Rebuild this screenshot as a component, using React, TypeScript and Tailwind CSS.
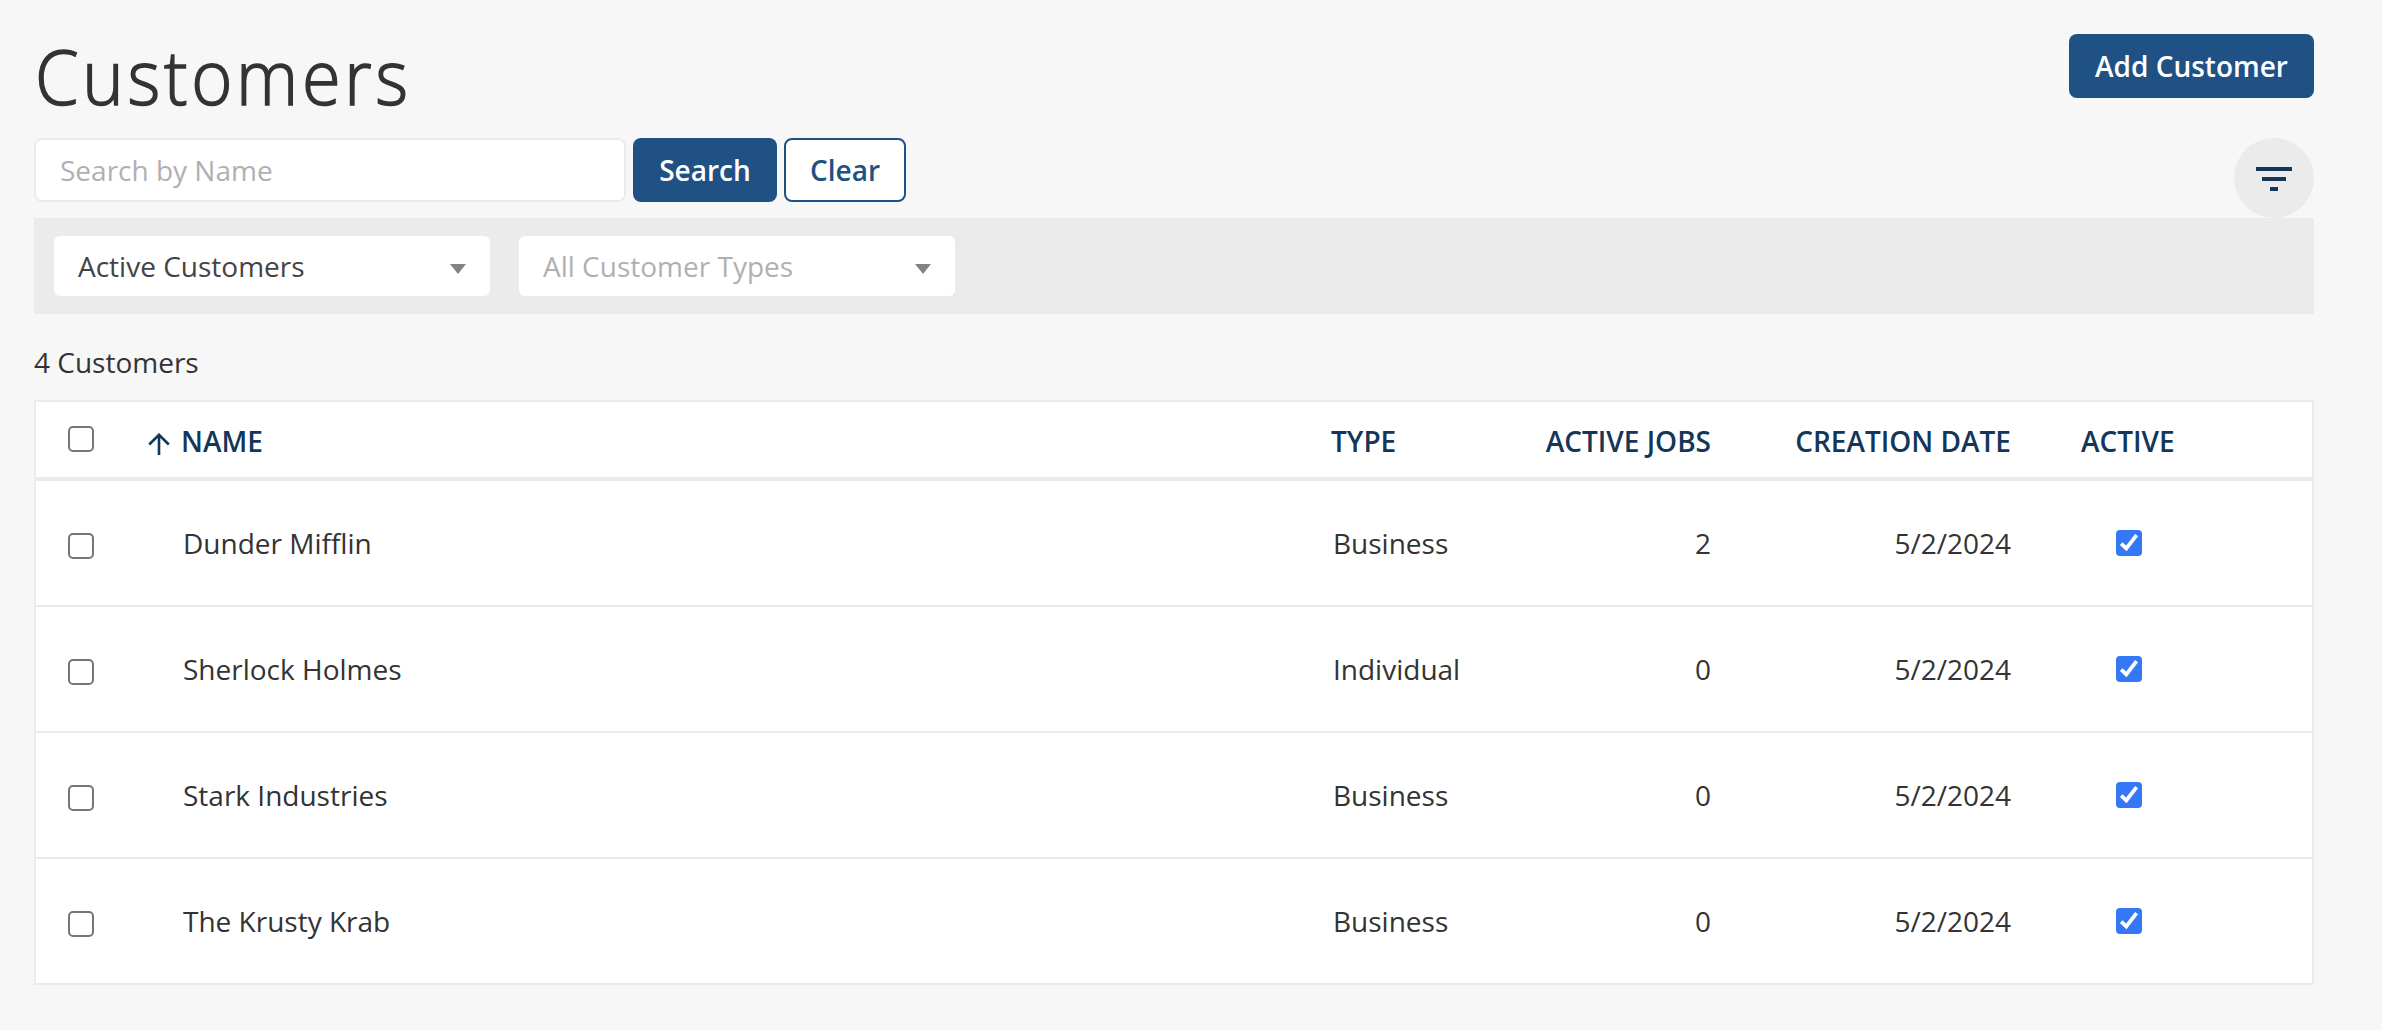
import { useState } from "react";

const customers = [
  { name: "Dunder Mifflin", type: "Business", jobs: 2, created: "5/2/2024" },
  { name: "Sherlock Holmes", type: "Individual", jobs: 0, created: "5/2/2024" },
  { name: "Stark Industries", type: "Business", jobs: 0, created: "5/2/2024" },
  { name: "The Krusty Krab", type: "Business", jobs: 0, created: "5/2/2024" },
];

const columns =
  "grid grid-cols-[112px_1183px_200px_180px_300px_1fr] items-center";

function Checkbox({ checked, onChange }: { checked: boolean; onChange: () => void }) {
  return (
    <button
      type="button"
      role="checkbox"
      aria-checked={checked}
      onClick={onChange}
      className={`block w-[26px] h-[26px] ${
        checked
          ? "rounded-[4px] bg-[#3478f6]"
          : "rounded-[5px] border-2 border-[#76767a] bg-white"
      }`}
    >
      {checked && (
        <svg viewBox="0 0 26 26" className="block w-[26px] h-[26px]">
          <path
            d="M5.2 13.6 L10.3 18.4 L20.6 5.2"
            fill="none"
            stroke="#fff"
            strokeWidth="3.8"
          />
        </svg>
      )}
    </button>
  );
}

function Select({ label, muted }: { label: string; muted?: boolean }) {
  return (
    <button
      type="button"
      className="flex items-center justify-between w-[436px] h-[60px] pl-6 pr-6 rounded-md bg-white"
    >
      <span className={muted ? "text-[#b0b0b0]" : "text-[#444]"}>{label}</span>
      <svg viewBox="0 0 16 10" className="w-4 h-2.5 mt-[6px]">
        <path d="M0 0h16L8 10z" fill="#808285" />
      </svg>
    </button>
  );
}

export default function App() {
  const [query, setQuery] = useState("");
  const [selected, setSelected] = useState<string[]>([]);
  const [inactive, setInactive] = useState<string[]>([]);

  const toggle = (list: string[], name: string) =>
    list.includes(name) ? list.filter((n) => n !== name) : [...list, name];

  const allSelected = selected.length === customers.length;

  return (
    <div className="min-h-screen bg-[#f7f7f7] pl-[34px] pr-[68px] pt-[34px] font-['Open_Sans',sans-serif] text-[28px] leading-[38px] text-[#333]">
      {/* Title */}
      <div className="flex items-start justify-between h-[104px]">
        <h1 className="origin-left scale-x-[0.925] font-light tracking-[4px] [-webkit-text-stroke:1.5px_#333] text-[76px] leading-[90px] text-[#333] -mt-[3px] ml-px">
          Customers
        </h1>
        <button
          type="button"
          className="w-[245px] h-16 rounded-lg bg-[#205184] text-white font-semibold"
        >
          Add Customer
        </button>
      </div>

      {/* Search */}
      <div className="flex items-start justify-between">
        <div className="flex gap-[7px]">
          <input
            type="text"
            placeholder="Search by Name"
            value={query}
            onChange={(e) => setQuery(e.target.value)}
            className="w-[592px] h-16 px-6 rounded-lg border-2 border-[#ebebeb] bg-white placeholder-[#b0b0b0] focus:outline-none"
          />
          <button
            type="button"
            className="w-36 h-16 rounded-lg bg-[#205184] text-white font-semibold"
          >
            Search
          </button>
          <button
            type="button"
            onClick={() => setQuery("")}
            className="w-[122px] h-16 rounded-lg border-2 border-[#205184] bg-white text-[#205184] font-semibold"
          >
            Clear
          </button>
        </div>
        <button
          type="button"
          aria-label="Filter"
          className="flex items-center justify-center w-20 h-20 rounded-full bg-[#ebebeb]"
        >
          <svg viewBox="0 0 36 24" className="w-9 h-6 mt-[2px]">
            <path d="M0 0h36v4H0zM6 10h24v4H6zM14 20h8v4h-8z" fill="#133659" />
          </svg>
        </button>
      </div>

      {/* Filters */}
      <div className="flex items-center gap-[29px] h-24 px-5 bg-[#ebebeb]">
        <Select label="Active Customers" />
        <Select label="All Customer Types" muted />
      </div>

      <p className="mt-[29px] mb-[19px]">{customers.length} Customers</p>

      {/* Table */}
      <div className="border-2 border-b-0 border-[#ebebeb] bg-white">
        <div
          className={`${columns} h-[79px] border-b-4 border-[#ebebeb] font-semibold text-[#133659]`}
        >
          <div className="pl-8 pb-[2px]">
            <Checkbox
              checked={allSelected}
              onChange={() =>
                setSelected(allSelected ? [] : customers.map((c) => c.name))
              }
            />
          </div>
          <div className="flex items-center gap-[11px] pt-[3px]">
            <svg viewBox="0 0 22 22" className="w-[22px] h-[22px] mt-[6px]">
              <path
                d="M11 22V2M1.2 11.5L11 1.8l9.8 9.7"
                fill="none"
                stroke="#133659"
                strokeWidth="2.6"
              />
            </svg>
            NAME
          </div>
          <div className="pt-[3px]">TYPE</div>
          <div className="pt-[3px] text-right whitespace-nowrap">ACTIVE JOBS</div>
          <div className="pt-[3px] text-right">CREATION DATE</div>
          <div className="pt-[3px] pl-[70px]">ACTIVE</div>
        </div>

        {customers.map((c) => (
          <div
            key={c.name}
            className={`${columns} h-[126px] border-b-2 border-[#ebebeb]`}
          >
            <div className="pl-8 pt-[6px]">
              <Checkbox
                checked={selected.includes(c.name)}
                onChange={() => setSelected((s) => toggle(s, c.name))}
              />
            </div>
            <div className="pl-[35px]">{c.name}</div>
            <div className="pl-0.5">{c.type}</div>
            <div className="text-right">{c.jobs}</div>
            <div className="text-right">{c.created}</div>
            <div className="pl-[105px]">
              <Checkbox
                checked={!inactive.includes(c.name)}
                onChange={() => setInactive((s) => toggle(s, c.name))}
              />
            </div>
          </div>
        ))}
      </div>
    </div>
  );
}
